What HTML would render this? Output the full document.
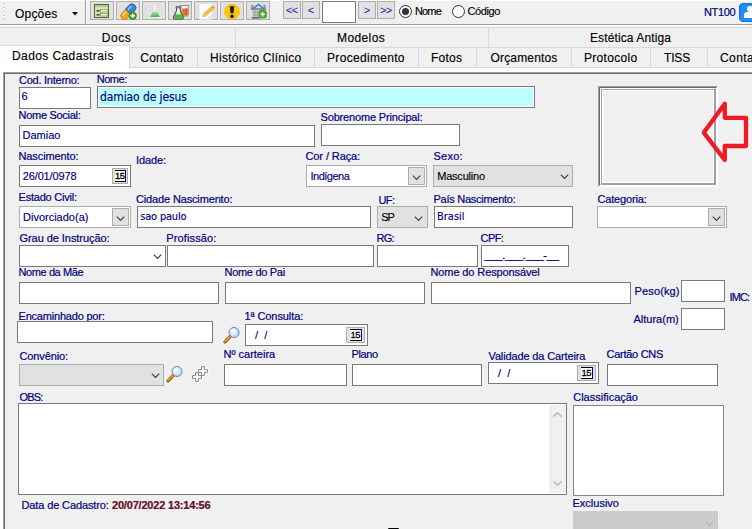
<!DOCTYPE html>
<html><head><meta charset="utf-8"><title>Cadastro</title>
<style>
html,body{margin:0;padding:0;background:#f0f0f0;}
#root{position:relative;width:752px;height:529px;overflow:hidden;background:#fff;font-family:"Liberation Sans",sans-serif;}
#root div,#root svg,#root span{position:absolute;box-sizing:border-box;white-space:nowrap;}
.lb{color:#00007a;-webkit-text-stroke:0.2px #00007a;}
.bk{color:#000;-webkit-text-stroke:0.15px #000;}
.tab{color:#000;-webkit-text-stroke:0.15px #000;}
.in{background:#fff;border:1px solid #7a7a7a;}
.cb{background:#fff;border:1px solid #adadad;}
.cg{background:#e1e1e1;border:1px solid #adadad;}
.btn{background:#e1e1e1;border:1px solid #adadad;}
.tx{color:#00007a;font-size:11px;line-height:14px;-webkit-text-stroke:0.15px;}
.th{font-family:"DejaVu Sans Condensed","DejaVu Sans",sans-serif;font-size:11px;}
.cal{background:#e1e1e1;border:1px solid #adadad;width:16px;height:16px;}
.cal b{position:absolute;left:2px;top:1px;width:11px;height:12px;box-sizing:border-box;background:#fff;border-top:1px solid #000;border-bottom:1px solid #000;border-right:1px solid #00008b;font:normal 9.5px/10.5px "Liberation Sans",sans-serif;color:#000;text-align:center;letter-spacing:-0.5px;text-indent:-0.5px;-webkit-text-stroke:0.3px #000;}
</style></head><body>
<div id="root">

<div style="left:0;top:1px;width:752px;height:23px;background:#f0f0f0"></div>
<div style="left:0;top:24px;width:752px;height:1px;background:#a0a0a0"></div>
<div style="left:3px;top:3px;width:2px;height:17px;background:repeating-linear-gradient(to bottom,#c8c8c8 0,#c8c8c8 1px,#fff 1px,#fff 2px,#f0f0f0 2px,#f0f0f0 4px)"></div>
<div id="t1" class="bk" style="left:15.0px;top:7.04px;font-size:12px;line-height:15px;letter-spacing:0.200px;">Opções</div>
<svg style="left:72px;top:12px" width="6" height="4" viewBox="0 0 6 4"><path d="M0 0H6L3 3.4Z" fill="#111"/></svg>
<div style="left:85px;top:0;width:1px;height:24px;background:#a0a0a0"></div>
<div style="left:86px;top:0;width:1px;height:24px;background:#fbfbfb"></div>
<div class="btn" style="left:90px;top:1px;width:24px;height:19px;"><svg style="left:3px;top:2px" width="17" height="15" viewBox="0 0 17 15"><rect x="0.5" y="0.5" width="14" height="13" fill="#d3e0b6" stroke="#4d6b23"/><rect x="1" y="1" width="13" height="2.600" fill="#b3c98b"/><rect x="1" y="3.600" width="13" height="0.800" fill="#edf3e0"/><rect x="2.600" y="6" width="3" height="1.600" fill="#3f5a1d"/><rect x="6.600" y="5.600" width="6.600" height="2.400" fill="#eef4e2" stroke="#6b8a3c" stroke-width="0.6"/><rect x="2.600" y="10" width="3" height="1.600" fill="#3f5a1d"/><rect x="6.600" y="9.600" width="6.600" height="2.400" fill="#eef4e2" stroke="#6b8a3c" stroke-width="0.6"/></svg></div>
<div class="btn" style="left:116px;top:1px;width:24px;height:19px;"><svg style="left:3px;top:1px" width="18" height="17" viewBox="0 0 18 17"><g transform="rotate(-47 8.300 8.800)"><rect x="-0.900" y="5" width="18.400" height="7.600" rx="3.800" fill="#f5a31d" stroke="#c9780d" stroke-width="0.8"/><path d="M8.300 5h5.400a3.800 3.800 0 0 1 0 7.600H8.300z" fill="#3a86e0" stroke="#1c5db4" stroke-width="0.8"/><rect x="1.500" y="6.200" width="5.500" height="1.800" rx="0.9" fill="#fbd28c"/><rect x="9.300" y="6.200" width="5.500" height="1.800" rx="0.9" fill="#8dbcf2"/></g><circle cx="12.700" cy="12.800" r="3.700" fill="#3aa51e" stroke="#2a7d12" stroke-width="0.7"/><path d="M12.700 10.500v4.600M10.400 12.800h4.600" stroke="#fff" stroke-width="1.5"/></svg></div>
<div class="btn" style="left:142px;top:1px;width:24px;height:19px;"><svg style="left:4px;top:1px" width="16" height="17" viewBox="0 0 16 17"><defs><linearGradient id="fk" x1="0" y1="0" x2="0" y2="1"><stop offset="0" stop-color="#b9e3bd"/><stop offset="1" stop-color="#3fb24d"/></linearGradient></defs><path d="M6.400 0.800h3.200v6.200l3.700 7.600c.2.500-.1.900-.7.900H3.400c-.6 0-.9-.4-.7-.9l3.700-7.600z" fill="#eeede6" stroke="#dddcd2" stroke-width="0.5"/><path d="M5.800 8.400h4.400l2.600 5.600H3.200z" fill="url(#fk)"/><rect x="1.800" y="15.300" width="12.400" height="0.900" fill="#dcdbd2"/></svg></div>
<div class="btn" style="left:168px;top:1px;width:24px;height:19px;"><svg style="left:3px;top:1px" width="18" height="18" viewBox="0 0 18 18"><path d="M8.200 2.500h9l-.8 1v8.200c0 .8-.5 1.300-1.300 1.300H10.300c-.8 0-1.300-.5-1.300-1.300V3.500z" fill="#f3f3ee" stroke="#8a8a86" stroke-width="0.9"/><path d="M10.200 5.600h5.300v6c0 .5-.3.800-.8.800H11c-.5 0-.8-.3-.8-.8z" fill="#e8742a"/><path d="M13.300 5.600h2.200v6.800h-2.200z" fill="#cf5f1d"/><path d="M4.600 4.200h3.600v3.300l3 6.300c.5 1.300-.2 2.300-1.500 2.300H3.100c-1.300 0-2-1-1.500-2.300l3-6.300z" fill="#f4f5f0" stroke="#4f514c" stroke-width="1.100" stroke-linejoin="round"/><path d="M3.600 10.600h5.600l1.500 3.300c.3.900-.1 1.500-1 1.500H3.100c-.9 0-1.300-.6-1-1.500z" fill="#3fbf2c"/><ellipse cx="6.400" cy="10.900" rx="2.700" ry="0.900" fill="#b4f0a6"/><rect x="3.900" y="3.500" width="5" height="1.300" rx="0.5" fill="#e9e9e4" stroke="#4f514c" stroke-width="0.8"/></svg></div>
<div class="btn" style="left:194px;top:1px;width:24px;height:19px;"><svg style="left:3px;top:1px" width="18" height="17" viewBox="0 0 18 17"><path d="M1.500 1h12.500v15.500H1.500z" fill="#fdfdfd"/><path d="M8 16.500l6-6v6z" fill="#e6e6e6"/><path d="M5.600 10.600l8.300-7.300 2 2.300-8.300 7.300-2.800.5z" fill="#f6c12d" stroke="#d99a13" stroke-width="0.6"/><path d="M13.900 3.300l.9-.8 2 2.300-.9.800z" fill="#e8872b"/><path d="M4.800 13.400l.8-2.800 2 2.300z" fill="#f0d8a8"/><path d="M4.800 13.400l.35-1.200.85.950z" fill="#555"/></svg></div>
<div class="btn" style="left:220px;top:1px;width:24px;height:19px;"><svg style="left:2px;top:1px" width="19" height="18" viewBox="0 0 19 18"><circle cx="9" cy="8.700" r="8" fill="#fcc40f"/><path d="M6.700 3.300h4.600l-.9 7H7.600z" fill="#1a1a1a"/><circle cx="9" cy="13.300" r="1.800" fill="#1a1a1a"/></svg></div>
<div class="btn" style="left:246px;top:1px;width:24px;height:19px;"><svg style="left:3px;top:1px" width="18" height="17" viewBox="0 0 18 17"><rect x="1.300" y="1.800" width="2" height="3.400" fill="#8a8a8a"/><rect x="13.500" y="1.800" width="2" height="3.400" fill="#8a8a8a"/><path d="M3 5.600L8.400 1.500 13.800 5.600" fill="none" stroke="#2f8fe6" stroke-width="1.700"/><rect x="0.800" y="5.400" width="15.400" height="1.400" fill="#5c5c5c"/><path d="M1.800 6.800h13.400l-.9 7.400H2.700z" fill="#e6e6e6"/><path d="M2 8.200h13M2.200 9.700h12.600M2.400 11.200h12.200M2.600 12.700h11.800M3.600 6.800l.5 7.400M5.500 6.800l.3 7.400M7.500 6.800v7.400M9.500 6.800l-.1 7.400M11.500 6.800l-.3 7.400M13.400 6.800l-.5 7.400" stroke="#8c8c8c" stroke-width="0.55"/><rect x="1.800" y="14.200" width="8" height="1.300" fill="#4a4a4a"/><rect x="9" y="7.600" width="7.400" height="7.400" rx="1.800" fill="#45b023" stroke="#2f8414" stroke-width="0.6"/><path d="M12.700 9.200v4.200M10.600 11.300h4.200" stroke="#fff" stroke-width="1.500"/></svg></div>
<div class="btn" style="left:283px;top:1px;width:18px;height:18px;"><span style="left:0;top:0;width:16px;height:16px;text-align:center;font:11px/17px 'Liberation Sans',sans-serif;color:#1a1a9a;letter-spacing:-0.6px;text-indent:-0.6px">&lt;&lt;</span></div>
<div class="btn" style="left:302px;top:1px;width:18px;height:18px;"><span style="left:0;top:0;width:16px;height:16px;text-align:center;font:11px/17px 'Liberation Sans',sans-serif;color:#1a1a9a;letter-spacing:-0.6px;text-indent:-0.6px">&lt;</span></div>
<div class="in" style="left:322px;top:1px;width:34px;height:22px;"></div>
<div class="btn" style="left:358px;top:1px;width:18px;height:18px;"><span style="left:0;top:0;width:16px;height:16px;text-align:center;font:11px/17px 'Liberation Sans',sans-serif;color:#1a1a9a;letter-spacing:-0.6px;text-indent:-0.6px">&gt;</span></div>
<div class="btn" style="left:377px;top:1px;width:18px;height:18px;"><span style="left:0;top:0;width:16px;height:16px;text-align:center;font:11px/17px 'Liberation Sans',sans-serif;color:#1a1a9a;letter-spacing:-0.6px;text-indent:-0.6px">&gt;&gt;</span></div>
<div style="left:399px;top:5px;width:13px;height:13px;border-radius:50%;background:#fff;border:1px solid #333"></div>
<div style="left:402px;top:8px;width:7px;height:7px;border-radius:50%;background:#333"></div>
<div id="t2" class="bk" style="left:415.0px;top:3.99px;font-size:11px;line-height:14px;letter-spacing:-0.850px;">Nome</div>
<div style="left:452px;top:5px;width:13px;height:13px;border-radius:50%;background:#fff;border:1px solid #333"></div>
<div id="t3" class="bk" style="left:467.5px;top:3.99px;font-size:11px;line-height:14px;letter-spacing:-0.400px;">Código</div>
<div id="t4" class="lb" style="left:704.0px;top:4.89px;font-size:11px;line-height:14px;letter-spacing:-0.350px;">NT100</div>
<div style="left:739px;top:3px;width:24px;height:19px;border-radius:4px;background:#1e8dfc;border:1px solid #0f6fe0"></div>
<div style="left:747px;top:6px;width:6px;height:6px;border-radius:50%;background:#fff"></div>
<div style="left:744px;top:12px;width:12px;height:6px;border-radius:3px 3px 1px 1px;background:#fff"></div>
<div style="left:0;top:27px;width:752px;height:21px;background:#f0f0f0;border-top:1px solid #d9d9d9;border-bottom:1px solid #d9d9d9"></div>
<div style="left:235px;top:27px;width:1px;height:20px;background:#d9d9d9"></div>
<div style="left:488px;top:27px;width:1px;height:20px;background:#d9d9d9"></div>
<div id="t5" class="tab" style="left:101.8px;top:31.44px;font-size:12px;line-height:15px;letter-spacing:0.500px;">Docs</div>
<div id="t6" class="tab" style="left:337.0px;top:31.44px;font-size:12px;line-height:15px;letter-spacing:0.400px;">Modelos</div>
<div id="t7" class="tab" style="left:590.0px;top:31.44px;font-size:12px;line-height:15px;letter-spacing:0.107px;">Estética Antiga</div>
<div style="left:130px;top:47px;width:622px;height:21px;background:#f0f0f0;border-top:1px solid #d9d9d9;border-bottom:1px solid #d9d9d9"></div>
<div style="left:197px;top:47px;width:1px;height:20px;background:#d9d9d9"></div>
<div style="left:314px;top:47px;width:1px;height:20px;background:#d9d9d9"></div>
<div style="left:418px;top:47px;width:1px;height:20px;background:#d9d9d9"></div>
<div style="left:476px;top:47px;width:1px;height:20px;background:#d9d9d9"></div>
<div style="left:571px;top:47px;width:1px;height:20px;background:#d9d9d9"></div>
<div style="left:650px;top:47px;width:1px;height:20px;background:#d9d9d9"></div>
<div style="left:707px;top:47px;width:1px;height:20px;background:#d9d9d9"></div>
<div style="left:0;top:45px;width:130px;height:24px;background:#fff;border-top:1px solid #d9d9d9;border-right:1px solid #d9d9d9"></div>
<div id="t8" class="tab" style="left:12.0px;top:48.64px;font-size:12px;line-height:15px;letter-spacing:0.400px;">Dados Cadastrais</div>
<div id="t9" class="tab" style="left:140.3px;top:50.94px;font-size:12px;line-height:15px;letter-spacing:0.200px;">Contato</div>
<div id="t10" class="tab" style="left:210.0px;top:50.94px;font-size:12px;line-height:15px;letter-spacing:0.281px;">Histórico Clínico</div>
<div id="t11" class="tab" style="left:327.0px;top:50.94px;font-size:12px;line-height:15px;letter-spacing:0.318px;">Procedimento</div>
<div id="t12" class="tab" style="left:431.0px;top:50.94px;font-size:12px;line-height:15px;letter-spacing:0.250px;">Fotos</div>
<div id="t13" class="tab" style="left:490.5px;top:50.94px;font-size:12px;line-height:15px;letter-spacing:0.167px;">Orçamentos</div>
<div id="t14" class="tab" style="left:584.0px;top:50.94px;font-size:12px;line-height:15px;letter-spacing:0.312px;">Protocolo</div>
<div id="t15" class="tab" style="left:664.0px;top:50.94px;font-size:12px;line-height:15px;letter-spacing:-0.167px;">TISS</div>
<div id="t16" class="tab" style="left:720.0px;top:50.94px;font-size:12px;line-height:15px;letter-spacing:0.400px;">Contas</div>
<div style="left:3px;top:72px;width:760px;height:470px;background:#f0f0f0;border:1px solid #a0a0a0"></div>
<div style="left:4px;top:73px;width:760px;height:470px;border:1px solid #696969"></div>
<div id="t17" class="lb" style="left:19.0px;top:72.69px;font-size:11px;line-height:14px;letter-spacing:-0.250px;">Cod. Interno:</div>
<div id="t18" class="lb" style="left:96.8px;top:72.09px;font-size:11px;line-height:14px;letter-spacing:-0.500px;">Nome:</div>
<div id="t19" class="lb" style="left:18.6px;top:107.59px;font-size:11px;line-height:14px;letter-spacing:-0.300px;">Nome Social:</div>
<div id="t20" class="lb" style="left:320.5px;top:109.99px;font-size:11px;line-height:14px;letter-spacing:-0.158px;">Sobrenome Principal:</div>
<div id="t21" class="lb" style="left:18.5px;top:149.19px;font-size:11px;line-height:14px;letter-spacing:-0.100px;">Nascimento:</div>
<div id="t22" class="lb" style="left:136.0px;top:153.19px;font-size:11px;line-height:14px;letter-spacing:-0.100px;">Idade:</div>
<div id="t23" class="lb" style="left:305.5px;top:149.19px;font-size:11px;line-height:14px;letter-spacing:-0.100px;">Cor / Raça:</div>
<div id="t24" class="lb" style="left:433.5px;top:149.19px;font-size:11px;line-height:14px;letter-spacing:0.250px;">Sexo:</div>
<div id="t25" class="lb" style="left:18.5px;top:189.69px;font-size:11px;line-height:14px;letter-spacing:-0.208px;">Estado Civil:</div>
<div id="t26" class="lb" style="left:136.0px;top:191.69px;font-size:11px;line-height:14px;letter-spacing:-0.147px;">Cidade Nascimento:</div>
<div id="t27" class="lb" style="left:378.5px;top:192.69px;font-size:11px;line-height:14px;letter-spacing:-0.600px;">UF:</div>
<div id="t28" class="lb" style="left:433.5px;top:191.69px;font-size:11px;line-height:14px;letter-spacing:-0.267px;">País Nascimento:</div>
<div id="t29" class="lb" style="left:597.5px;top:191.69px;font-size:11px;line-height:14px;letter-spacing:-0.167px;">Categoria:</div>
<div id="t30" class="lb" style="left:19.5px;top:230.69px;font-size:11px;line-height:14px;letter-spacing:-0.059px;">Grau de Instrução:</div>
<div id="t31" class="lb" style="left:166.3px;top:230.69px;font-size:11px;line-height:14px;letter-spacing:0.133px;">Profissão:</div>
<div id="t32" class="lb" style="left:376.5px;top:230.69px;font-size:11px;line-height:14px;letter-spacing:-0.750px;">RG:</div>
<div id="t33" class="lb" style="left:480.5px;top:230.69px;font-size:11px;line-height:14px;letter-spacing:-0.567px;">CPF:</div>
<div id="t34" class="lb" style="left:18.5px;top:265.19px;font-size:11px;line-height:14px;letter-spacing:-0.400px;">Nome da Mãe</div>
<div id="t35" class="lb" style="left:224.5px;top:265.19px;font-size:11px;line-height:14px;letter-spacing:-0.300px;">Nome do Pai</div>
<div id="t36" class="lb" style="left:430.5px;top:265.19px;font-size:11px;line-height:14px;letter-spacing:-0.111px;">Nome do Responsável</div>
<div id="t37" class="lb" style="left:634.5px;top:283.99px;font-size:11px;line-height:14px;letter-spacing:0.143px;">Peso(kg)</div>
<div id="t38" class="lb" style="left:729.5px;top:289.69px;font-size:11px;line-height:14px;letter-spacing:-0.850px;">IMC:</div>
<div id="t39" class="lb" style="left:633.5px;top:312.09px;font-size:11px;line-height:14px;letter-spacing:0.000px;">Altura(m)</div>
<div id="t40" class="lb" style="left:18.5px;top:308.69px;font-size:11px;line-height:14px;letter-spacing:-0.200px;">Encaminhado por:</div>
<div id="t41" class="lb" style="left:244.5px;top:308.69px;font-size:11px;line-height:14px;letter-spacing:-0.091px;">1ª Consulta:</div>
<div id="t42" class="lb" style="left:19.5px;top:349.19px;font-size:11px;line-height:14px;letter-spacing:-0.125px;">Convênio:</div>
<div id="t43" class="lb" style="left:223.5px;top:346.69px;font-size:11px;line-height:14px;letter-spacing:0.000px;">Nº carteira</div>
<div id="t44" class="lb" style="left:351.5px;top:346.69px;font-size:11px;line-height:14px;letter-spacing:-0.375px;">Plano</div>
<div id="t45" class="lb" style="left:488.5px;top:349.19px;font-size:11px;line-height:14px;letter-spacing:-0.132px;">Validade da Carteira</div>
<div id="t46" class="lb" style="left:606.5px;top:346.69px;font-size:11px;line-height:14px;letter-spacing:-0.278px;">Cartão CNS</div>
<div id="t47" class="lb" style="left:19.5px;top:390.19px;font-size:11px;line-height:14px;letter-spacing:-0.850px;">OBS:</div>
<div id="t48" class="lb" style="left:573.2px;top:389.79px;font-size:11px;line-height:14px;letter-spacing:0.000px;">Classificação</div>
<div id="t49" class="lb" style="left:572.5px;top:495.69px;font-size:11px;line-height:14px;letter-spacing:0.000px;">Exclusivo</div>
<div id="t50" class="lb" style="left:21.5px;top:498.19px;font-size:11px;line-height:14px;letter-spacing:-0.125px;">Data de Cadastro:</div>
<div id="t51" class="lb" style="left:112.0px;top:498.19px;font-size:11px;line-height:14px;letter-spacing:-0.194px;color:#7a0a0a;font-weight:bold;">20/07/2022 13:14:56</div>
<div class="in" style="left:19px;top:87px;width:72px;height:22px;"><span class="tx" style="left:1.5px;top:1.2px;">6</span></div>
<div class="in" style="left:97px;top:86px;width:438px;height:22px;background:#bbffff;box-shadow:inset 0 0 0 1px #fff;"><span class="tx th" style="left:2px;top:3px;font-size:12px;line-height:15px;letter-spacing:-0.1px;">damiao de jesus</span></div>
<div class="in" style="left:19px;top:125px;width:296px;height:22px;"><span class="tx" style="left:2.5px;top:2px;">Damiao</span></div>
<div class="in" style="left:321px;top:124px;width:139px;height:22px;"></div>
<div class="in" style="left:19px;top:165px;width:112px;height:22px;"><span class="tx" style="left:2.8px;top:2.5px;letter-spacing:-0.15px;">26/01/0978</span><div class="cal" style="left:92px;top:2px"><b>15</b></div></div>
<div class="cb" style="left:306px;top:165px;width:121px;height:22px;"><span class="tx" style="left:3.5px;top:3.2px;letter-spacing:-0.5px;">Indígena</span><div class="btn" style="right:1px;top:1px;width:17px;bottom:1px"><svg style="left:3px;top:6.5px" width="9" height="6" viewBox="0 0 9 6"><path d="M0.8 0.7 L4.5 4.4 L8.2 0.7" fill="none" stroke="#3c3c3c" stroke-width="1.15"/></svg></div></div>
<div class="cg" style="left:433px;top:165px;width:140px;height:22px;"><span class="tx" style="left:3.2px;top:2.5px;color:#000;letter-spacing:-0.2px;">Masculino</span><svg style="right:3.5px;top:8px" width="9" height="6" viewBox="0 0 9 6"><path d="M0.8 0.7 L4.5 4.4 L8.2 0.7" fill="none" stroke="#3c3c3c" stroke-width="1.15"/></svg></div>
<div class="cb" style="left:19px;top:206px;width:112px;height:22px;"><span class="tx" style="left:3px;top:2.6px;">Divorciado(a)</span><div class="btn" style="right:1px;top:1px;width:17px;bottom:1px"><svg style="left:3px;top:6.5px" width="9" height="6" viewBox="0 0 9 6"><path d="M0.8 0.7 L4.5 4.4 L8.2 0.7" fill="none" stroke="#3c3c3c" stroke-width="1.15"/></svg></div></div>
<div class="in" style="left:137px;top:206px;width:234px;height:22px;"><span class="tx th" style="left:2.3px;top:2.5px;letter-spacing:-0.2px;">sao paulo</span></div>
<div class="cg" style="left:377px;top:206px;width:51px;height:22px;"><span class="tx" style="left:3.2px;top:3.2px;color:#000;letter-spacing:-1px;">SP</span><svg style="right:4px;top:8.5px" width="9" height="6" viewBox="0 0 9 6"><path d="M0.8 0.7 L4.5 4.4 L8.2 0.7" fill="none" stroke="#3c3c3c" stroke-width="1.15"/></svg></div>
<div class="in" style="left:434px;top:206px;width:139px;height:22px;"><span class="tx th" style="left:2px;top:2.5px;">Brasil</span></div>
<div class="cb" style="left:597px;top:206px;width:130px;height:22px;"><div class="btn" style="right:1px;top:1px;width:17px;bottom:1px"><svg style="left:3px;top:6.5px" width="9" height="6" viewBox="0 0 9 6"><path d="M0.8 0.7 L4.5 4.4 L8.2 0.7" fill="none" stroke="#3c3c3c" stroke-width="1.15"/></svg></div></div>
<div class="in" style="left:19px;top:245px;width:147px;height:22px;"><svg style="right:3.5px;top:8px" width="9" height="6" viewBox="0 0 9 6"><path d="M0.8 0.7 L4.5 4.4 L8.2 0.7" fill="none" stroke="#3c3c3c" stroke-width="1.15"/></svg></div>
<div class="in" style="left:167px;top:245px;width:207px;height:22px;"></div>
<div class="in" style="left:377px;top:245px;width:101px;height:22px;"></div>
<div class="in" style="left:481px;top:245px;width:88px;height:22px;"><span class="tx" style="left:2.6px;top:2px;letter-spacing:-0.22px;-webkit-text-stroke:0.3px;">___.___.___-__</span></div>
<div class="in" style="left:19px;top:282px;width:200px;height:22px;"></div>
<div class="in" style="left:225px;top:282px;width:200px;height:22px;"></div>
<div class="in" style="left:431px;top:282px;width:200px;height:22px;"></div>
<div class="in" style="left:681px;top:280px;width:44px;height:22px;"></div>
<div class="in" style="left:681px;top:308px;width:44px;height:22px;"></div>
<div class="in" style="left:17px;top:321px;width:196px;height:22px;"></div>
<div class="in" style="left:245px;top:324px;width:123px;height:22px;"><span class="tx" style="left:9px;top:2.5px;">/&nbsp;&nbsp;/</span><div class="cal" style="right:2px;top:2px;width:19px"><b style="left:3px;width:12px">15</b></div></div>
<div class="cg" style="left:19px;top:364px;width:145px;height:22px;"><svg style="right:3.5px;top:8px" width="9" height="6" viewBox="0 0 9 6"><path d="M0.8 0.7 L4.5 4.4 L8.2 0.7" fill="none" stroke="#3c3c3c" stroke-width="1.15"/></svg></div>
<div class="in" style="left:224px;top:364px;width:123px;height:22px;"></div>
<div class="in" style="left:352px;top:364px;width:130px;height:22px;"></div>
<div class="in" style="left:488px;top:362px;width:111px;height:22px;"><span class="tx" style="left:9px;top:2.5px;">/&nbsp;&nbsp;/</span><div class="cal" style="right:2px;top:2px;width:19px"><b style="left:3px;width:12px">15</b></div></div>
<div class="in" style="left:607px;top:364px;width:111px;height:22px;"></div>
<div class="in" style="left:18px;top:403px;width:549px;height:92px;"><div style="right:0;top:1px;bottom:1px;width:17px;background:#f0f0f0"><svg style="left:4px;top:7px" width="9" height="5" viewBox="0 0 9 5"><path d="M0.5 4.5L4.5 0.7 8.5 4.5" fill="none" stroke="#bdbdbd" stroke-width="1.6"/></svg><svg style="left:4px;bottom:7px" width="9" height="5" viewBox="0 0 9 5"><path d="M0.5 0.5L4.5 4.3 8.5 0.5" fill="none" stroke="#bdbdbd" stroke-width="1.6"/></svg></div></div>
<div class="in" style="left:573px;top:405px;width:151px;height:91px;border-color:#828790;"></div>
<div class="cg" style="left:573px;top:511px;width:145px;height:29px;background:#cccccc;border-color:#cccccc;"><svg style="right:3.5px;top:8.5px" width="9" height="6" viewBox="0 0 9 6"><path d="M0.8 0.7 L4.5 4.4 L8.2 0.7" fill="none" stroke="#b4b4b4" stroke-width="1.15"/></svg></div>
<div style="left:598px;top:86px;width:120px;height:101px;border:1px solid #a0a0a0;border-right-color:#fff;border-bottom-color:#fff;background:#f0f0f0;"></div>
<div style="left:599px;top:87px;width:118px;height:99px;border:1px solid #696969;border-right-color:#fff;border-bottom-color:#fff;"></div>
<div style="left:600px;top:88px;width:116px;height:97px;border:1px solid #fff;border-right-color:#a0a0a4;border-bottom-color:#a0a0a4;"></div>
<div style="left:601px;top:89px;width:114px;height:95px;border:1px solid #a0a3a8;border-right-color:#a0a0a4;border-bottom-color:#a0a0a4;"></div>
<div style="left:602px;top:90px;width:112px;height:93px;border:1px solid #fff;border-right-color:#fff;border-bottom-color:#fff;"></div>
<svg style="left:695px;top:95px" width="57" height="75" viewBox="695 95 57 75"><path d="M703.8 132.6L724.8 103.8V117.8H746V146H724.8V160Z" fill="none" stroke="#ed1c24" stroke-width="4.3" stroke-linejoin="round"/></svg>
<svg style="left:165.5px;top:365px" width="18" height="18" viewBox="0 0 18 18"><defs><radialGradient id="g1" cx="0.4" cy="0.35" r="0.7"><stop offset="0" stop-color="#fff"/><stop offset="1" stop-color="#a9d8ff"/></radialGradient></defs><path d="M6.800 10.800L2 15.800" stroke="#7a4a18" stroke-width="3.200" stroke-linecap="round"/><path d="M6.800 10.600L2 15.400" stroke="#f59a1e" stroke-width="2" stroke-linecap="round"/><circle cx="11" cy="6.500" r="5" fill="url(#g1)" stroke="#6a6aa2" stroke-width="0.9"/></svg>
<svg style="left:222.5px;top:325.5px" width="18" height="18" viewBox="0 0 18 18"><defs><radialGradient id="g2" cx="0.4" cy="0.35" r="0.7"><stop offset="0" stop-color="#fff"/><stop offset="1" stop-color="#a9d8ff"/></radialGradient></defs><path d="M6.800 10.800L2 15.800" stroke="#7a4a18" stroke-width="3.200" stroke-linecap="round"/><path d="M6.800 10.600L2 15.400" stroke="#f59a1e" stroke-width="2" stroke-linecap="round"/><circle cx="11" cy="6.500" r="5" fill="url(#g2)" stroke="#6a6aa2" stroke-width="0.9"/></svg>
<svg style="left:188px;top:362px" width="24" height="24" viewBox="0 0 24 24"><path d="M13.6 4.6H16.4V7.6H19.4V10.4H16.4V13.4H13.6V10.4H10.6V7.6H13.6Z M7.6 10.6H10.4V13.6H13.4V16.4H10.4V19.4H7.6V16.4H4.6V13.6H7.6Z" fill="#fdfdfd" stroke="#fff" stroke-width="2.4"/><path d="M13.6 4.6H16.4V7.6H19.4V10.4H16.4V13.4H13.6V10.4H10.6V7.6H13.6Z M7.6 10.6H10.4V13.6H13.4V16.4H10.4V19.4H7.6V16.4H4.6V13.6H7.6Z" fill="none" stroke="#808080" stroke-width="1"/></svg>
<div style="left:388px;top:528px;width:11px;height:2px;background:#000;border-radius:1px 1px 0 0"></div>
</div></body></html>
